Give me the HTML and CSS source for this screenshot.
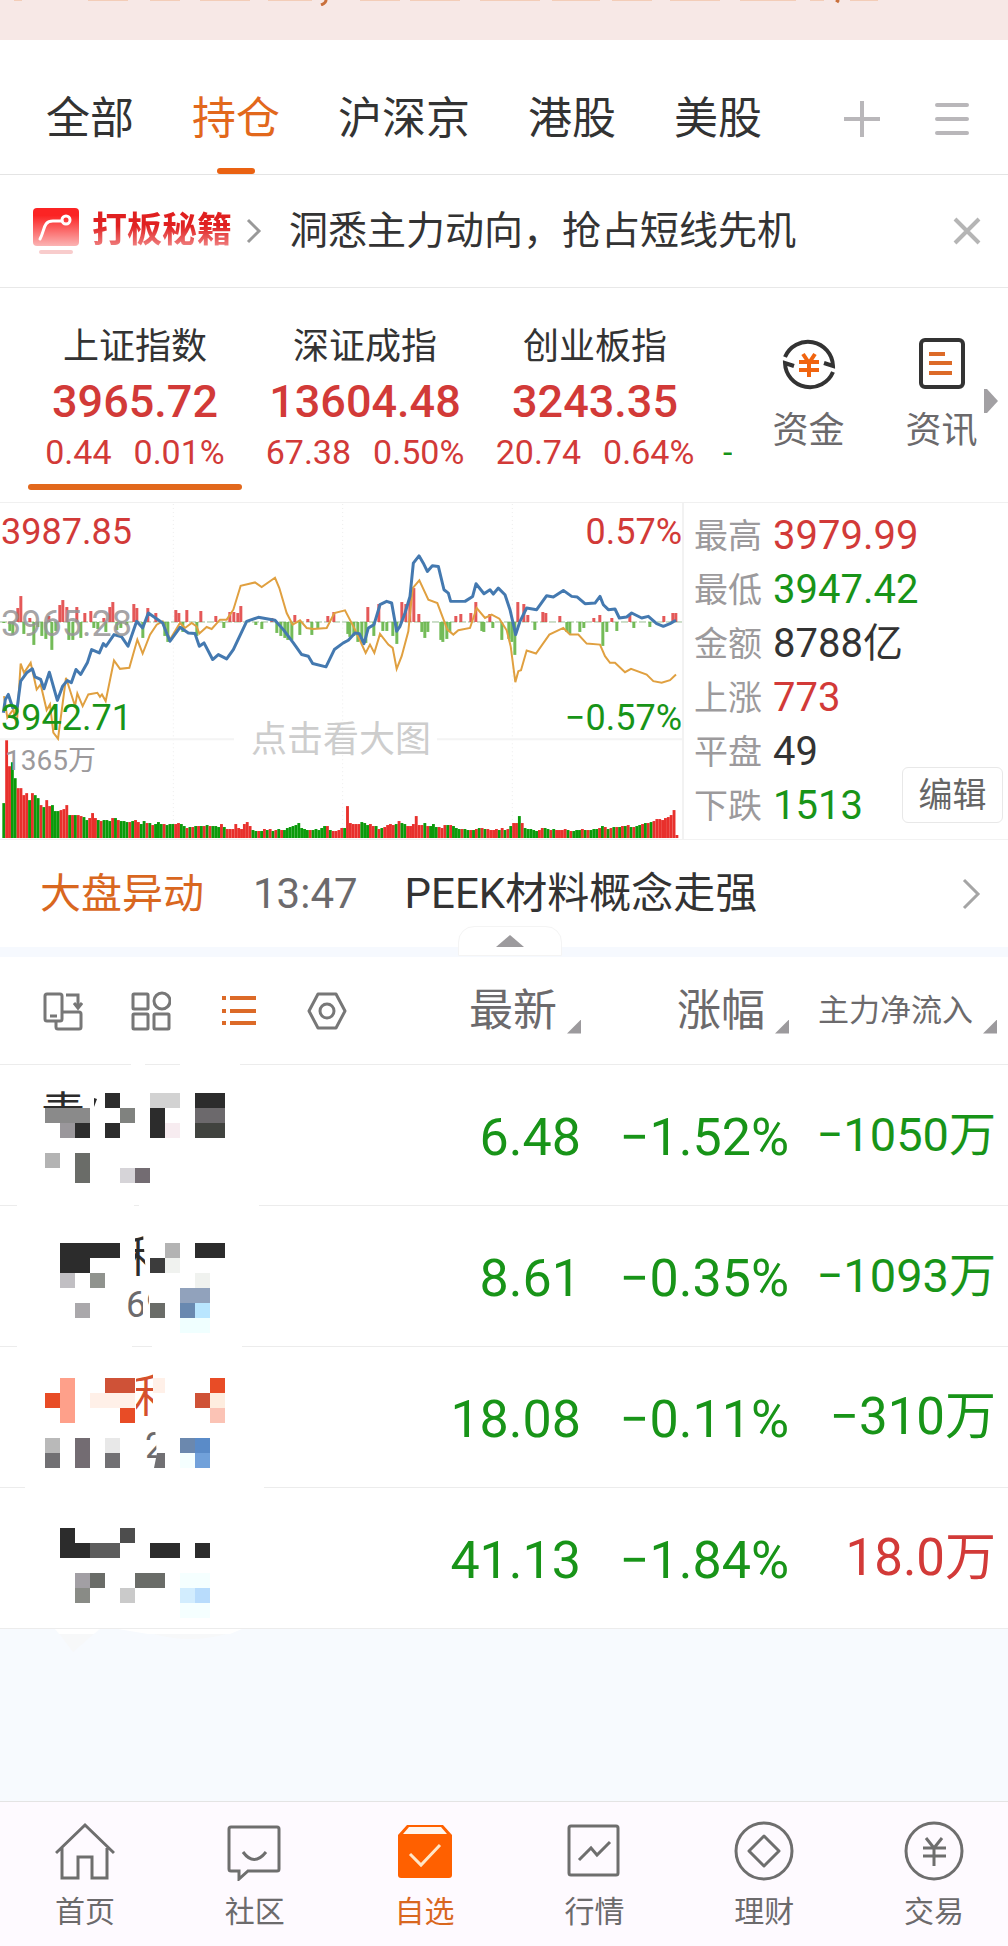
FILE: index.html
```html
<!DOCTYPE html>
<html lang="zh-CN">
<head>
    <meta charset="UTF-8">
    <meta name="viewport" content="width=device-width, initial-scale=1.0">
    <title>自选 - 持仓</title>
    <link rel="stylesheet" href="styles.css">
</head>
<body>
    <div class="notice">
        <svg width="900" height="6" viewBox="0 0 900 6">
            <path d="M326 0q0 3-5 5M836 0l3 2" stroke="#c9703c" stroke-width="3" fill="none"/>
            <path d="M14 0h8M88 0h40M150 0h30M200 0h50M268 0h44M360 0h40M410 0h50M480 0h60M552 0h48M612 0h40M670 0h50M740 0h56M810 0h14M850 0h28" stroke="#f3cdb8" stroke-width="2"/>
        </svg>
    </div>

    <nav class="tabs">
        <a href="#">全部</a>
        <a href="#" class="active">持仓</a>
        <a href="#">沪深京</a>
        <a href="#">港股</a>
        <a href="#">美股</a>
        <div class="tab-tools">
            <button aria-label="添加">
                <svg width="36" height="36" viewBox="0 0 36 36" stroke="#b9b7ba" stroke-width="4"><path d="M0 18h36M18 0v36"/></svg>
            </button>
            <button aria-label="菜单">
                <svg width="36" height="36" viewBox="0 0 36 36" stroke="#b9b7ba" stroke-width="4" stroke-linecap="round"><path d="M3 4h30M3 18h30M3 32h30"/></svg>
            </button>
        </div>
    </nav>

    <div class="promo">
        <svg width="46" height="46" viewBox="0 0 46 46">
            <defs>
                <linearGradient id="promoRed" x1="0" y1="0" x2="0" y2="1">
                    <stop offset="0.2" stop-color="#fb2424"/>
                    <stop offset="1" stop-color="#fbb4b4"/>
                </linearGradient>
            </defs>
            <rect width="46" height="38" rx="4" fill="url(#promoRed)"/>
            <path d="M7 31C12 22 10 13 20 13h9" stroke="#fff" stroke-width="3" fill="none" stroke-linecap="round"/>
            <circle cx="33" cy="12" r="4" stroke="#fff" stroke-width="3" fill="none"/>
            <rect x="6" y="42" width="34" height="4" rx="2" fill="#f8cccc"/>
        </svg>
        <strong>打板秘籍</strong>
        <svg class="promo-arrow" width="16" height="26" viewBox="0 0 16 26"><path d="M2 2l11 11L2 24" stroke="#999" stroke-width="3" fill="none"/></svg>
        <a href="#">洞悉主力动向，抢占短线先机</a>
        <button aria-label="关闭">
            <svg width="28" height="28" viewBox="0 0 28 28"><path d="M2 2l24 24M26 2L2 26" stroke="#b5b5b5" stroke-width="4"/></svg>
        </button>
    </div>

    <section class="indices">
        <div class="index-list">
            <div class="index active">
                <h2>上证指数</h2>
                <b>3965.72</b>
                <p><span>0.44</span><span>0.01%</span></p>
            </div>
            <div class="index">
                <h2>深证成指</h2>
                <b>13604.48</b>
                <p><span>67.38</span><span>0.50%</span></p>
            </div>
            <div class="index">
                <h2>创业板指</h2>
                <b>3243.35</b>
                <p><span>20.74</span><span>0.64%</span></p>
            </div>
            <div class="index-more">-</div>
        </div>
        <div class="shortcuts">
            <a href="#">
                <svg width="56" height="56" viewBox="0 0 56 56" fill="none" stroke-width="4">
                    <path d="M4 21A25 25 0 0 1 52 30L43 27M52 36A25 25 0 0 1 4 27L13 30" stroke="#333"/>
                    <path d="M22 18l6 9 6-9M18 26h20M18 34h20M28 26v15" stroke="#f0640f"/>
                </svg>
                <span>资金</span>
            </a>
            <a href="#">
                <svg width="56" height="56" viewBox="0 0 56 56" fill="none" stroke-width="4">
                    <rect x="7" y="4" width="42" height="47" rx="4" stroke="#333"/>
                    <path d="M15 18h16M15 27h23M15 37h23" stroke="#dc6a28"/>
                </svg>
                <span>资讯</span>
            </a>
            <svg class="more-arrow" width="14" height="24" viewBox="0 0 14 24"><path d="M0 0h3l11 12L3 24H0z" fill="#a2a0a3"/></svg>
        </div>
    </section>

    <section class="market">
        <div class="chart">
            <svg class="plot" viewBox="0 9 2046 1011" preserveAspectRatio="none">
                <path d="M520 12v1005M1028 12v1005M1537 12v1005" stroke="#ececec" stroke-width="3" stroke-dasharray="3 9"/>
                <path d="M0 720h702M1311 720h735" stroke="#f4f4f4" stroke-width="6"/>
                <path d="M0 367h2046" stroke="#9bbf95" stroke-width="3" stroke-dasharray="21 6"/>
                <g id="flow" opacity="0.85"></g>
                <g id="volume"></g>
                <polyline fill="none" stroke="#e0a040" stroke-width="6" points="12,590 22,655 40,630 50,680 62,492 72,520 92,490 110,570 122,555 140,632 150,615 160,700 174,718 198,535 225,620 232,582 248,620 265,585 292,580 300,592 306,585 317,605 342,483 360,508 388,505 412,420 428,462 450,405 470,375 488,365 510,420 540,370 555,385 575,370 590,380 598,402 620,382 635,388 660,360 680,360 700,330 722,258 765,248 785,262 825,234 838,265 860,340 878,375 900,362 920,385 940,388 980,385 1003,340 1035,332 1065,390 1097,460 1110,435 1123,460 1140,403 1165,435 1178,445 1190,508 1205,470 1225,395 1238,265 1258,242 1285,300 1312,310 1342,390 1360,405 1375,392 1410,385 1430,325 1455,355 1475,345 1498,357 1520,392 1532,440 1546,548 1555,515 1563,512 1580,453 1608,462 1648,405 1690,385 1710,405 1735,405 1760,432 1800,435 1815,470 1830,490 1845,490 1875,518 1893,508 1940,525 1960,545 1985,550 2010,542 2028,525"/>
                <polyline fill="none" stroke="#4479b0" stroke-width="9" stroke-linejoin="round" points="10,640 16,600 25,585 38,625 52,622 62,545 80,520 97,508 105,532 122,540 132,568 148,518 172,603 188,560 202,543 214,550 228,510 242,525 262,490 275,450 298,460 310,432 318,440 342,405 365,412 384,440 410,365 428,385 445,340 488,370 510,425 540,383 565,400 585,402 598,440 612,430 638,480 655,465 680,478 700,450 740,365 775,353 825,362 850,390 880,430 905,465 925,470 938,492 978,502 1003,450 1030,430 1045,422 1065,400 1078,402 1092,432 1105,385 1122,375 1140,315 1160,305 1175,310 1190,395 1200,380 1215,340 1230,290 1240,190 1257,168 1270,190 1282,215 1297,198 1315,200 1332,270 1345,280 1352,305 1395,305 1418,290 1428,252 1452,282 1470,270 1480,283 1495,265 1515,285 1530,330 1547,405 1560,365 1580,325 1610,330 1640,288 1660,292 1690,272 1715,290 1732,292 1755,312 1785,310 1800,290 1810,315 1825,330 1845,328 1858,355 1880,352 1895,340 1925,355 1945,350 1970,372 1990,380 2010,372 2028,362"/>
            </svg>
            <span class="label high red">3987.85</span>
            <span class="label high right red">0.57%</span>
            <span class="label mid">3965.28</span>
            <span class="label low green">3942.71</span>
            <span class="label low right green">−0.57%</span>
            <span class="label vol">1365万</span>
            <span class="label hint">点击看大图</span>
        </div>
        <div class="stats">
            <dl>
                <dt>最高</dt><dd class="red">3979.99</dd>
                <dt>最低</dt><dd class="green">3947.42</dd>
                <dt>金额</dt><dd>8788亿</dd>
                <dt>上涨</dt><dd class="red">773</dd>
                <dt>平盘</dt><dd>49</dd>
                <dt>下跌</dt><dd class="green">1513</dd>
            </dl>
            <button class="edit">编辑</button>
        </div>
    </section>

    <div class="news">
        <strong>大盘异动</strong>
        <time>13:47</time>
        <a href="#">PEEK材料概念走强</a>
        <svg width="20" height="32" viewBox="0 0 20 32"><path d="M3 2l14 14L3 30" stroke="#a5a5a5" stroke-width="3" fill="none"/></svg>
        <button class="collapse" aria-label="收起">
            <svg width="28" height="12" viewBox="0 0 28 12"><path d="M14 0l14 12H0z" fill="#9c9a9d"/></svg>
        </button>
    </div>

    <table class="stocks">
        <thead>
            <tr>
                <th class="name">
                    <div class="views">
                        <button aria-label="切换">
                            <svg width="40" height="40" viewBox="0 0 40 40"><rect x="2" y="3" width="17" height="27" rx="2"/><path d="M7 25h7M23 4h12v13M31 12l4 5 4-5M13 30v6q0 2 2 2h21q2 0 2-2V23q0-2-2-2H19"/></svg>
                        </button>
                        <button aria-label="宫格">
                            <svg width="40" height="40" viewBox="0 0 40 40"><rect x="2" y="3" width="15" height="15" rx="1"/><circle cx="31" cy="10" r="8"/><rect x="2" y="23" width="15" height="15" rx="1"/><rect x="23" y="23" width="15" height="15" rx="1"/></svg>
                        </button>
                        <button aria-label="列表" class="on">
                            <svg width="40" height="40" viewBox="0 0 40 40"><path d="M3 7h4M11 7h26M3 20h4M11 20h26M3 32h4M11 32h26"/></svg>
                        </button>
                        <button aria-label="设置">
                            <svg width="40" height="40" viewBox="0 0 40 40"><path d="M11 3h18l9 17-9 17H11L2 20z" stroke-linejoin="round"/><circle cx="20" cy="20" r="7"/></svg>
                        </button>
                    </div>
                </th>
                <th class="price"><button>最新<i></i></button></th>
                <th class="change"><button>涨幅<i></i></button></th>
                <th class="inflow"><button>主力净流入<i></i></button></th>
            </tr>
        </thead>
        <tbody>
            <tr>
                <td class="name">
                    <svg height="141">
                        <defs><clipPath id="top1"><path d="M38 24h47v20H38z"/></clipPath></defs>
                        <path class="rule" d="M0 0h131v1H0zM145 0h35v1h-35zM240 0h400v1H240z"/>
                        <text x="41" y="65" class="stock" clip-path="url(#top1)">青</text>
                        <path fill="#2c2c2c" d="M75 59h15v15H75zM105 29h15v15h-15zM105 59h15v15h-15zM150 44h15v30h-15zM195 29h30v15h-30zM94 34l3 1-3 8z"/>
                        <path fill="#8a8a8a" d="M45 44h45v15H45z"/>
                        <path fill="#9a979b" d="M60 59h15v15H60z"/>
                        <path fill="#80827f" d="M120 44h15v15h-15z"/>
                        <path fill="#d2d2d2" d="M150 29h30v15h-30z"/>
                        <path fill="#f7ecf0" d="M165 59h15v15h-15z"/>
                        <path fill="#6c696c" d="M195 44h30v15h-30z"/>
                        <path fill="#41433f" d="M195 59h30v15h-30z"/>
                        <path fill="#b3b3b3" d="M45 89h15v15H45z"/>
                        <path fill="#6a6c68" d="M75 89h15v30H75z"/>
                        <path fill="#d6d4d8" d="M120 104h15v15h-15z"/>
                        <path fill="#736c72" d="M135 104h15v15h-15z"/>
                    </svg>
                </td>
                <td>6.48</td>
                <td>−1.52%</td>
                <td class="long">−1050万</td>
            </tr>
            <tr>
                <td class="name">
                    <svg height="141">
                        <defs><clipPath id="top2"><path d="M135 28h8l3 43h-11zM127 80h16v36h-16zM145 86h4v15h-4z"/></clipPath></defs>
                        <path class="rule" d="M0 0h17v1H0zM134 0h5v1h-5zM259 0h400v1H259z"/>
                        <g clip-path="url(#top2)">
                            <text x="125" y="68" class="stock">利</text>
                            <text x="126" y="112" class="code">69</text>
                        </g>
                        <path fill="#2c2c2c" d="M60 38h60v15H60zM60 53h30v15H60zM195 38h30v15h-30z"/>
                        <path fill="#c1bfc3" d="M60 68h15v15H60z"/>
                        <path fill="#90938e" d="M90 68h15v15H90z"/>
                        <path fill="#aaa8ab" d="M75 98h15v15H75z"/>
                        <path fill="#3c3c3c" d="M150 53h15v15h-15z"/>
                        <path fill="#b3b3b3" d="M165 38h15v15h-15z"/>
                        <path fill="#f0f2ef" d="M165 53h15v15h-15zM195 68h15v15h-15z"/>
                        <path fill="#6a6c68" d="M150 98h15v15h-15z"/>
                        <path fill="#91a2bc" d="M180 83h30v15h-30z"/>
                        <path fill="#6989b0" d="M180 98h15v15h-15z"/>
                        <path fill="#b9e6ff" d="M195 98h15v15h-15z"/>
                        <path fill="#f0ffff" d="M180 113h30v15h-30z"/>
                    </svg>
                </td>
                <td>8.61</td>
                <td>−0.35%</td>
                <td class="long">−1093万</td>
            </tr>
            <tr>
                <td class="name">
                    <svg height="141">
                        <defs><clipPath id="top3"><path d="M136 26h17v45h-17zM146 80h9l2 32h-11z"/></clipPath></defs>
                        <path class="rule" d="M0 0h17v1H0zM132 0h20v1h-20zM242 0h400v1H242z"/>
                        <path fill="#fff0e8" d="M90 47h45v15H90zM153 32h12v15h-12z"/>
                        <g clip-path="url(#top3)">
                            <text x="133" y="66" class="stock hot">利</text>
                            <text x="145" y="112" class="code">2</text>
                        </g>
                        <path fill="#e84c26" d="M45 47h15v15H45zM120 62h15v15h-15zM210 32h15v15h-15z"/>
                        <path fill="#fea08a" d="M60 32h15v45H60z"/>
                        <path fill="#cf5237" d="M105 32h30v15h-30zM195 47h15v15h-15z"/>
                        <path fill="#feeddf" d="M210 47h15v15h-15z"/>
                        <path fill="#fbc3b5" d="M210 62h15v15h-15z"/>
                        <path fill="#b9b9b9" d="M45 92h15v15H45z"/>
                        <path fill="#717073" d="M45 107h15v15H45zM105 107h15v15h-15zM157 107h8v15h-11z"/>
                        <path fill="#736c72" d="M75 92h15v30H75z"/>
                        <path fill="#e8e8e8" d="M105 92h15v15h-15z"/>
                        <path fill="#6b88ae" d="M180 92h15v15h-15z"/>
                        <path fill="#5a8bc8" d="M195 92h15v15h-15z"/>
                        <path fill="#71a1da" d="M195 107h15v15h-15z"/>
                        <path fill="#f5ffff" d="M180 107h15v15h-15z"/>
                    </svg>
                </td>
                <td>18.08</td>
                <td>−0.11%</td>
                <td>−310万</td>
            </tr>
            <tr>
                <td class="name">
                    <svg height="141">
                        <path class="rule" d="M0 0h25v1H0zM264 0h400v1H264z"/>
                        <path fill="#2c2c2c" d="M60 41h15v15h15v15H60zM150 56h30v15h-30zM195 56h15v15h-15z"/>
                        <path fill="#5d5d5d" d="M90 56h30v15H90z"/>
                        <path fill="#4d4d4d" d="M120 41h15v15h-15z"/>
                        <path fill="#a29fa4" d="M75 86h15v15H75z"/>
                        <path fill="#6a6c68" d="M90 86h15v15H90zM135 86h30v15h-30z"/>
                        <path fill="#898b86" d="M75 101h15v15H75z"/>
                        <path fill="#cacaca" d="M120 101h15v15h-15z"/>
                        <path fill="#f5ffff" d="M180 86h30v15h-30zM180 116h30v15h-30z"/>
                        <path fill="#d2edfe" d="M180 101h15v15h-15z"/>
                        <path fill="#b8dcfc" d="M195 101h15v15h-15z"/>
                    </svg>
                </td>
                <td>41.13</td>
                <td>−1.84%</td>
                <td class="red">18.0万</td>
            </tr>
        </tbody>
    </table>

    <div class="blank">
        <svg width="300" height="26" viewBox="0 0 300 26">
            <path fill="#f7f8f9" d="M58 3h38L73 23zM150 4h80q-40 12-80 0z"/>
            <path fill="#fff" d="M55 0h45l-6 5H59zM118 0h124l-12 5h-82z"/>
        </svg>
    </div>

    <nav class="bottom-nav">
        <a href="#">
            <svg width="60" height="60" viewBox="0 0 60 60"><path d="M1 32L30 4l29 28M7 27v30h16V36h14v21h15V27"/></svg>
            首页
        </a>
        <a href="#">
            <svg width="60" height="60" viewBox="0 0 60 60"><path d="M6 6h46q2 0 2 2v40q0 2-2 2H23l-9 8v-8H6q-2 0-2-2V8q0-2 2-2zM18 31q11 15 23 0"/></svg>
            社区
        </a>
        <a href="#" class="active">
            <svg width="60" height="60" viewBox="0 0 60 60"><path d="M3 14l9-10h36l9 10v40q0 3-3 3H6q-3 0-3-3z" fill="#ff6000" stroke="none"/><path d="M8 13l6-7h32l6 7z" fill="#fff6ee" stroke="none"/><path d="M15 33l11 11 19-20" stroke="#ffe6c8"/></svg>
            自选
        </a>
        <a href="#">
            <svg width="60" height="60" viewBox="0 0 60 60"><rect x="5" y="5" width="49" height="49" rx="2"/><path d="M15 39l12-12 6 7 13-13"/></svg>
            行情
        </a>
        <a href="#">
            <svg width="60" height="60" viewBox="0 0 60 60"><circle cx="30" cy="30" r="28"/><path d="M30 15l15 15-15 15-15-15z" stroke-linejoin="round"/></svg>
            理财
        </a>
        <a href="#">
            <svg width="60" height="60" viewBox="0 0 60 60"><circle cx="30" cy="30" r="28"/><path d="M22 17l8 10 8-10M19 27h23M19 35h23M30 27v18"/></svg>
            交易
        </a>
    </nav>

    <script src="chart.js"></script>
</body>
</html>
```
FILE: styles.css
```css
* {
    margin: 0;
    padding: 0;
    box-sizing: border-box;
}

body {
    display: flex;
    flex-direction: column;
    min-height: 100vh;
    background: #fff;
    color: #333;
    font-family: Roboto, "Noto Sans CJK SC", sans-serif;
}

a {
    color: inherit;
    text-decoration: none;
}

button {
    border: none;
    background: none;
    color: inherit;
    font: inherit;
    cursor: pointer;
}

svg {
    display: block;
    flex-shrink: 0;
}

.red {
    color: #d23a38;
}

.green {
    color: #189418;
}

.notice {
    height: 40px;
    background: #f7e8e6;
    overflow: hidden;
}

/* top tabs */
.tabs {
    display: flex;
    align-items: center;
    gap: 58px;
    height: 135px;
    padding: 23px 38px 0 46px;
    border-bottom: 1px solid #e4e4e4;
    font-size: 44px;
    line-height: 66px;
    white-space: nowrap;
}

.tabs .active {
    position: relative;
    color: #e2681c;
}

.tabs .active::after {
    content: "";
    position: absolute;
    left: 25px;
    bottom: -22px;
    width: 38px;
    height: 6px;
    border-radius: 3px;
    background: #ea6212;
}

.tab-tools {
    display: flex;
    gap: 54px;
    margin-left: auto;
}

/* promo */
.promo {
    display: flex;
    align-items: center;
    height: 113px;
    padding: 0 27px 0 33px;
    border-bottom: 1px solid #e8e8e8;
    font-size: 39px;
    line-height: 52px;
    white-space: nowrap;
}

.promo strong {
    margin: 0 14px 0 13px;
    font-size: 35px;
    background: linear-gradient(#e02020 40%, #f49a9a 90%);
    -webkit-background-clip: text;
    background-clip: text;
    color: transparent;
}

.promo-arrow {
    margin-right: 27px;
}

.promo button {
    margin-left: auto;
}

/* indices */
.indices {
    display: flex;
    justify-content: space-between;
    height: 215px;
    border-bottom: 1px solid #f0f0f0;
}

.index-list {
    display: flex;
    padding: 34px 0 0 20px;
    overflow: hidden;
}

.index {
    position: relative;
    width: 230px;
    text-align: center;
    color: #d23a38;
    white-space: nowrap;
}

.index h2 {
    font-size: 36px;
    font-weight: 400;
    line-height: 50px;
    color: #333;
}

.index b {
    display: block;
    font-size: 45px;
    font-weight: 500;
    line-height: 60px;
}

.index p {
    display: flex;
    justify-content: center;
    gap: 22px;
    font-size: 34px;
    line-height: 40px;
}

.index.active::after {
    content: "";
    display: block;
    height: 6px;
    margin: 12px 8px 0;
    border-radius: 3px;
    background: #e2681c;
}

.index-more {
    padding: 110px 0 0 13px;
    font-size: 34px;
    line-height: 40px;
    color: #189418;
}

.shortcuts {
    position: relative;
    display: flex;
    width: 266px;
    padding-top: 48px;
}

.shortcuts a {
    flex: 1;
    display: flex;
    flex-direction: column;
    align-items: center;
    gap: 14px;
    font-size: 36px;
    line-height: 50px;
    color: #6c6a6c;
}

.more-arrow {
    position: absolute;
    top: 101px;
    right: 10px;
}

/* chart + stats */
.market {
    display: flex;
    height: 337px;
    border-bottom: 1px solid #f2f2f2;
}

.chart {
    position: relative;
    flex: 1;
    border-right: 2px solid #f2f2f2;
}

.plot {
    width: 100%;
    height: 100%;
}

.label {
    position: absolute;
    left: 1px;
    font-size: 36px;
    line-height: 46px;
}

.label.right {
    left: auto;
    right: 0;
}

.label.high {
    top: 6px;
}

.label.mid {
    top: 98px;
    color: rgba(150, 148, 150, 0.85);
}

.label.low {
    top: 192px;
}

.label.vol {
    left: 5px;
    top: 235px;
    font-size: 28px;
    color: #9c9a9c;
}

.label.hint {
    left: 0;
    right: 0;
    top: 214px;
    text-align: center;
    color: #cdcdcd;
}

.stats {
    position: relative;
    width: 324px;
    padding: 6px 0 0 10px;
}

.stats dl {
    display: grid;
    grid-template-columns: 68px 1fr;
    column-gap: 11px;
    line-height: 54px;
}

.stats dt {
    font-size: 34px;
    color: #9c9a9c;
}

.stats dd {
    font-size: 40px;
}

.edit {
    position: absolute;
    right: 5px;
    bottom: 16px;
    width: 101px;
    height: 56px;
    border: 1px solid #e8e8e8;
    border-radius: 6px;
    background: #fff;
    font-size: 34px;
    line-height: 50px;
    color: #666;
}

/* news line */
.news {
    position: relative;
    display: flex;
    align-items: center;
    height: 117px;
    padding: 0 27px 0 40px;
    border-bottom: 10px solid #f6f9fe;
    font-size: 42px;
    line-height: 60px;
    white-space: nowrap;
}

.news strong {
    font-size: 41px;
    font-weight: 400;
    color: #d9671f;
}

.news time {
    margin: 0 47px 0 49px;
    color: #6c6a6c;
}

.news > svg {
    margin-left: auto;
}

.collapse {
    position: absolute;
    left: 50%;
    bottom: -9px;
    display: flex;
    justify-content: center;
    align-items: center;
    width: 104px;
    height: 30px;
    margin-left: -46px;
    border: 1px solid #f4f4f4;
    border-radius: 16px 16px 0 0;
    background: #fff;
}

/* stock table */
.stocks {
    width: 100%;
    table-layout: fixed;
    border-collapse: separate;
    border-spacing: 0;
}

.stocks th {
    height: 107px;
    font-weight: 400;
    color: #6c6a6c;
}

.stocks .price {
    width: 203px;
}

.stocks .change {
    width: 208px;
}

.stocks .inflow {
    width: 219px;
}

.stocks th button {
    display: flex;
    justify-content: flex-end;
    align-items: center;
    gap: 10px;
    width: 100%;
    font-size: 44px;
    line-height: 48px;
    white-space: nowrap;
}

.stocks th.inflow {
    padding-right: 11px;
}

.stocks th.inflow button {
    font-size: 31px;
}

.stocks i {
    width: 14px;
    height: 14px;
    margin-top: 32px;
    background: #9c9a9d;
    clip-path: polygon(100% 0, 100% 100%, 0 100%);
}

.views {
    display: flex;
    gap: 48px;
    padding-left: 43px;
}

.stocks .views button {
    width: 40px;
}

.views svg {
    fill: none;
    stroke: #777;
    stroke-width: 3;
}

.views .on svg {
    stroke: #dc6a28;
    stroke-width: 4;
}

.stocks td {
    height: 141px;
    padding-top: 6px;
    border-top: 1px solid #ececec;
    font-size: 52px;
    line-height: 60px;
    text-align: right;
    color: #189418;
    white-space: nowrap;
}

.stocks td:last-child {
    padding: 0 12px 0 0;
    font-size: 51px;
}

.stocks td.long {
    font-size: 47px;
}

.stocks td.red {
    color: #d23a38;
}

.stocks td.name {
    padding: 0;
    border-top: none;
}

.name svg {
    width: 100%;
}

.views button svg {
    width: 40px;
}

.rule {
    fill: #ececec;
}

.stock {
    font-size: 44px;
    fill: #2c2c2c;
}

.stock.hot {
    fill: #d5502c;
}

.code {
    font-size: 36px;
    fill: #6c6a6c;
}

.blank {
    flex: 1;
    min-height: 80px;
    border-top: 1px solid #ececec;
    background: #f7fafe;
}

/* bottom nav */
.bottom-nav {
    display: flex;
    justify-content: space-between;
    height: 145px;
    padding: 19px 44px 0 55px;
    border-top: 1px solid #e4e4e4;
    background: #fefaff;
}

.bottom-nav a {
    display: flex;
    flex-direction: column;
    align-items: center;
    gap: 8px;
    width: 60px;
    font-size: 30px;
    line-height: 46px;
    color: #6c6a6c;
    white-space: nowrap;
}

.bottom-nav svg {
    fill: none;
    stroke: #6e6e6e;
    stroke-width: 3;
}

.bottom-nav .active {
    color: #d9671f;
}
```
FILE: chart.js
```js
// volume per minute
const volume = [
    35, 98, 72, 76, 60, 50, 50, 43, 45, 38, 45, 43, 40, 33, 31, 38, 32, 33, 27, 27, 28, 29, 33, 23, 23, 23, 23, 22, 21, 18,
    20, 25, 20, 18, 17, 18, 18, 17, 20, 20, 18, 17, 17, 16, 16, 17, 18, 16, 14, 17, 15, 15, 13, 14, 16, 14, 14, 13, 14, 14,
    14, 15, 14, 12, 10, 11, 11, 12, 12, 12, 12, 13, 12, 12, 12, 11, 14, 11, 9, 9, 9, 14, 10, 9, 14, 16, 12, 8, 7, 7,
    7, 9, 8, 9, 7, 8, 9, 8, 8, 10, 11, 12, 13, 15, 10, 9, 8, 8, 8, 9, 8, 10, 12, 12, 8, 7, 7, 8, 10, 10,
    32, 15, 14, 14, 14, 16, 15, 13, 14, 12, 12, 9, 10, 11, 13, 14, 13, 14, 17, 15, 14, 12, 12, 14, 22, 13, 13, 15, 12,
    12, 14, 11, 11, 10, 13, 13, 13, 12, 10, 9, 9, 9, 8, 8, 8, 9, 10, 10, 9, 9, 8, 8, 9, 8, 10, 8, 9, 12, 15,
    15, 22, 15, 10, 9, 9, 8, 7, 8, 10, 10, 9, 8, 9, 8, 8, 8, 9, 8, 7, 7, 8, 8, 9, 8, 8, 8, 9, 9, 10,
    12, 11, 9, 10, 11, 11, 11, 12, 12, 13, 11, 11, 12, 13, 14, 15, 15, 16, 17, 19, 19, 18, 20, 21, 23, 28, 3
];
const colors =
    "grrggrrrrgrggrgrrgggrrrgrgrrggrrrgrgggrgrgggrgrrggrg" +
    "rgggrgggrrggrgrgrgrgrgggrgrrrrrrrrrggrgrgrgrgrgggggggggrggggg" +
    "rgrrrrgrrrrrgggrrgrgrrrrgrggrrrrrrgrgggrrrgrgggrggrgrgrgrrrrgrg" +
    "rgrrgrgggggrrggrgrrrrgrgggrgrgggrgrgrgrgrgrgrggrgrgrggrgggrrrrg";

// [x, height], above the middle line when positive
const flow = [
    [4, -1], [10, -9], [13, -13], [18, 14], [21, 26], [24, -12], [30, 4], [34, -23], [38, -5], [42, -14], [46, -17],
    [49, 6], [52, -28], [56, -9], [60, 17], [63, 22], [67, 15], [69, -18], [73, -18], [77, 15], [81, -16], [85, 9],
    [91, 11], [94, -6], [98, -7], [104, 4], [106, -10], [110, 15], [113, 20], [117, -8], [121, -6], [127, -3],
    [134, 18], [137, 14], [143, -16], [148, 14], [156, 9], [165, -14], [168, -20], [176, 12], [179, 9], [183, -10],
    [187, 12], [197, -14], [201, 11], [216, 6], [224, -6], [230, 10], [234, 10], [238, 9], [241, 16], [256, -3],
    [262, -7], [272, 4], [277, -11], [281, -14], [285, -16], [288, -18], [292, -18], [295, 7], [300, -13], [308, 3],
    [312, -13], [318, -7], [328, 6], [334, 10], [348, -12], [350, -15], [354, -14], [358, -20], [362, -21],
    [366, -21], [368, 15], [374, -14], [379, 18], [383, -9], [387, -9], [393, -14], [397, -22], [402, 20], [406, 18],
    [410, 24], [414, 34], [419, 8], [422, -10], [425, -16], [428, -10], [441, -18], [443, -20], [447, -17],
    [450, -10], [456, 6], [461, 8], [471, 9], [476, 20], [482, -9], [484, -10], [490, 8], [493, -6], [502, -18],
    [509, -17], [512, -20], [515, -33], [518, 20], [524, 18], [528, 7], [535, -8], [543, 10], [546, 9], [560, 6],
    [567, -10], [570, -12], [580, -10], [584, -6], [594, 4], [600, 7], [603, -24], [607, -10], [612, 4], [617, -9],
    [630, 7], [634, -6], [650, -5], [664, 6], [673, 9], [676, 9]
];

function addBar(parent, x, y, width, height, color) {
    const bar = document.createElementNS("http://www.w3.org/2000/svg", "rect");
    bar.setAttribute("x", x);
    bar.setAttribute("y", y);
    bar.setAttribute("width", width);
    bar.setAttribute("height", height);
    bar.setAttribute("fill", color);
    parent.appendChild(bar);
}

const volumeGroup = document.getElementById("volume");
const step = 2028 / volume.length;
const last = volume.length - 1;
volume.forEach(function(value, i) {
    // the closing run is all rising apart from the open minute
    const rising = i > last - 8 && i < last ? true : colors[i] === "r";
    addBar(volumeGroup, 7 + i * step, 1017 - value * 3, step, value * 3, rising ? "#e8302c" : "#0a9a0a");
});

const flowGroup = document.getElementById("flow");
flow.forEach(function([x, height]) {
    const size = Math.abs(height) * 3;
    addBar(flowGroup, x * 3 - 5, height > 0 ? 367 - size : 367, 9, size, height > 0 ? "#e03c3c" : "#5cb03c");
});
```
